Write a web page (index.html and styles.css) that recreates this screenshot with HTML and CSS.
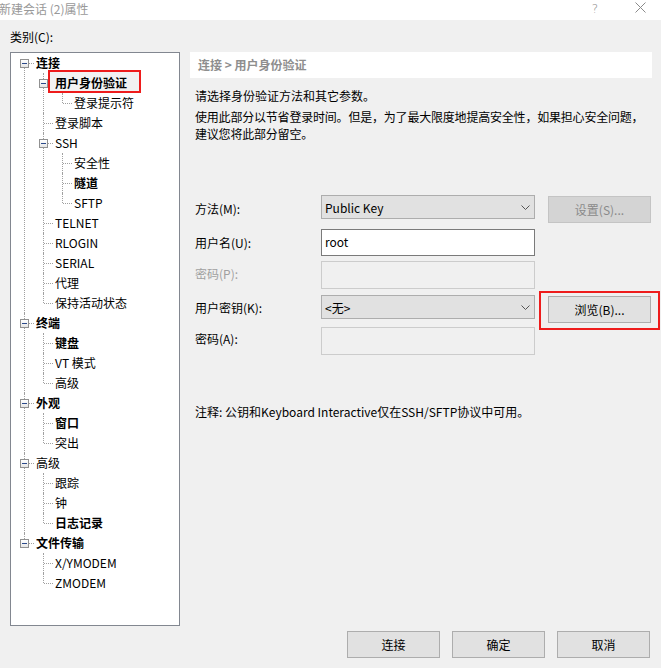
FILE: index.html
```html
<!DOCTYPE html>
<html lang="zh-CN">
<head>
<meta charset="utf-8">
<title>新建会话 (2)属性</title>
<link rel="stylesheet" href="styles.css">
</head>
<body>
<div class="titlebar">
  <span class="title">新建会话 (2)属性</span>
  <span class="tb-help">?</span>
  <span class="tb-close"><svg width="11" height="11" viewBox="0 0 11 11"><path d="M0.5 0.5L10.5 10.5M10.5 0.5L0.5 10.5" stroke="#8a8a8a" stroke-width="1" fill="none"/></svg></span>
</div>
<div class="content">
  <div class="cat-label">类别(C):</div>
  <div class="main">
    <div class="treebox">
      <ul class="tree">
        <li><div class="row"><span class="exp"></span><span class="lbl b">连接</span></div>
          <ul>
            <li><div class="row"><span class="exp"></span><span class="lbl b sel">用户身份验证</span></div>
              <ul>
                <li><div class="row"><span class="lbl">登录提示符</span></div></li>
              </ul>
            </li>
            <li><div class="row"><span class="lbl">登录脚本</span></div></li>
            <li><div class="row"><span class="exp"></span><span class="lbl">SSH</span></div>
              <ul>
                <li><div class="row"><span class="lbl">安全性</span></div></li>
                <li><div class="row"><span class="lbl b">隧道</span></div></li>
                <li><div class="row"><span class="lbl">SFTP</span></div></li>
              </ul>
            </li>
            <li><div class="row"><span class="lbl">TELNET</span></div></li>
            <li><div class="row"><span class="lbl">RLOGIN</span></div></li>
            <li><div class="row"><span class="lbl">SERIAL</span></div></li>
            <li><div class="row"><span class="lbl">代理</span></div></li>
            <li><div class="row"><span class="lbl">保持活动状态</span></div></li>
          </ul>
        </li>
        <li><div class="row"><span class="exp"></span><span class="lbl b">终端</span></div>
          <ul>
            <li><div class="row"><span class="lbl b">键盘</span></div></li>
            <li><div class="row"><span class="lbl">VT 模式</span></div></li>
            <li><div class="row"><span class="lbl">高级</span></div></li>
          </ul>
        </li>
        <li><div class="row"><span class="exp"></span><span class="lbl b">外观</span></div>
          <ul>
            <li><div class="row"><span class="lbl b">窗口</span></div></li>
            <li><div class="row"><span class="lbl">突出</span></div></li>
          </ul>
        </li>
        <li><div class="row"><span class="exp"></span><span class="lbl">高级</span></div>
          <ul>
            <li><div class="row"><span class="lbl">跟踪</span></div></li>
            <li><div class="row"><span class="lbl">钟</span></div></li>
            <li><div class="row"><span class="lbl b">日志记录</span></div></li>
          </ul>
        </li>
        <li><div class="row"><span class="exp"></span><span class="lbl b">文件传输</span></div>
          <ul>
            <li><div class="row"><span class="lbl">X/YMODEM</span></div></li>
            <li><div class="row"><span class="lbl">ZMODEM</span></div></li>
          </ul>
        </li>
      </ul>
    </div>
    <div class="panel">
      <div class="crumb">连接 &gt; 用户身份验证</div>
      <p class="desc d1">请选择身份验证方法和其它参数。</p>
      <p class="desc d2">使用此部分以节省登录时间。但是，为了最大限度地提高安全性，如果担心安全问题，建议您将此部分留空。</p>
      <div class="form">
        <div class="flabel l1">方法(M):</div>
        <div class="select"><span>Public Key</span><svg class="chev" width="9" height="5" viewBox="0 0 9 5"><path d="M0.5 0.5L4.5 4.5L8.5 0.5" stroke="#555" stroke-width="1" fill="none"/></svg></div>
        <div class="btn btn-dis btn-side">设置(S)...</div>

        <div class="flabel l2">用户名(U):</div>
        <div class="input">root</div>
        <div></div>

        <div class="flabel l3 dis">密码(P):</div>
        <div class="input input-dis"></div>
        <div></div>

        <div class="flabel l4">用户密钥(K):</div>
        <div class="select"><span>&lt;无&gt;</span><svg class="chev" width="9" height="5" viewBox="0 0 9 5"><path d="M0.5 0.5L4.5 4.5L8.5 0.5" stroke="#555" stroke-width="1" fill="none"/></svg></div>
        <div class="btn btn-side marked">浏览(B)...</div>

        <div class="flabel l5">密码(A):</div>
        <div class="input input-dis"></div>
        <div></div>
      </div>
      <p class="note">注释: 公钥和Keyboard Interactive仅在SSH/SFTP协议中可用。</p>
    </div>
  </div>
  <div class="footer">
    <div class="btn btn-foot">连接</div>
    <div class="btn btn-foot">确定</div>
    <div class="btn btn-foot">取消</div>
  </div>
</div>
</body>
</html>
```

FILE: styles.css
```css
* { box-sizing: border-box; }
html, body {
  margin: 0;
  padding: 0;
}
body {
  width: 661px;
  height: 668px;
  overflow: hidden;
  background: #f0f0f0;
  color: #000;
  font-family: "Microsoft YaHei", "Noto Sans CJK SC", sans-serif;
  font-size: 12px;
}

.titlebar {
  height: 20px;
  background: #fff;
  display: flex;
  align-items: center;
  position: relative;
}
.title {
  color: #999;
  font-size: 12px;
  line-height: 17px;
  margin-left: -1px;
  margin-top: -4px;
}
.tb-help {
  margin-left: auto;
  color: #8a8a8a;
  font-family: "DejaVu Sans", sans-serif;
  font-weight: 200;
  font-size: 12px;
  margin-top: -3px;
}
.tb-close {
  margin-left: 37px;
  margin-right: 15px;
  display: flex;
  margin-top: -5px;
}

.content {
  padding: 9px 0 0 10px;
}
.cat-label {
  height: 16px;
  line-height: 16px;
  margin-bottom: 7px;
}
.main {
  display: flex;
  gap: 10px;
  align-items: flex-start;
}

/* Tree */
.treebox {
  width: 170px;
  height: 574px;
  background: #fff;
  border: 1px solid #828790;
  overflow: hidden;
}
.tree, .tree ul {
  list-style: none;
  margin: 0;
  padding: 0;
}
.tree ul { padding-left: 19px; }
.tree li { position: relative; }
.tree li::before {
  content: "";
  position: absolute;
  left: 13px;
  top: 0;
  bottom: 0;
  border-left: 1px dotted #a0a0a0;
}
.tree li:last-child::before {
  bottom: auto;
  height: 10px;
}
.tree > li:first-child::before { top: 10px; }
.row {
  position: relative;
  height: 20px;
  line-height: 20px;
  padding-left: 25px;
  white-space: nowrap;
}
.row::before {
  content: "";
  position: absolute;
  left: 14px;
  top: 10px;
  width: 9px;
  border-top: 1px dotted #a0a0a0;
}
.exp {
  position: absolute;
  left: 9px;
  top: 6px;
  width: 9px;
  height: 9px;
  border: 1px solid #919191;
  background: linear-gradient(#ffffff, #e6e6e6);
  z-index: 1;
}
.exp::before {
  content: "";
  position: absolute;
  left: 1px;
  top: 3px;
  width: 5px;
  height: 1px;
  background: #2b4a8a;
}
.lbl {
  display: inline-block;
  height: 20px;
  line-height: 20px;
}
.b { font-weight: bold; }
.sel {
  position: relative;
  z-index: 0;
}
.sel::before {
  content: "";
  position: absolute;
  left: -5px;
  right: -12px;
  top: -1px;
  bottom: 2px;
  background: #f2f2f2;
  z-index: -1;
}
.sel::after {
  content: "";
  position: absolute;
  left: -7px;
  right: -14px;
  top: -3px;
  bottom: 0;
  border: 2px solid #ee1c1c;
}

/* Right panel */
.panel {
  width: 462px;
}
.crumb {
  height: 26px;
  line-height: 26px;
  background: #fff;
  padding-left: 8px;
  color: #8e8e8e;
  font-weight: bold;
}
.desc {
  margin: 0;
  padding-left: 5px;
  line-height: 17px;
}
.d1 { margin-top: 9px; }
.d2 { margin-top: 4px; padding-right: 0; letter-spacing: -0.2px; }

.form {
  display: grid;
  grid-template-columns: 126px 214px 116px;
  grid-template-rows: 34px 32px 34px 32px 28px;
  margin: 53px 0 0 5px;
}
.flabel { white-space: nowrap; }
.l1 { line-height: 27px; }
.l2 { line-height: 27px; }
.l3 { line-height: 26px; }
.l4 { line-height: 26px; }
.l5 { line-height: 24px; }
.dis { color: #a0a0a0; }

.select {
  height: 24px;
  border: 1px solid #adadad;
  background: #e1e1e1;
  display: flex;
  align-items: center;
  justify-content: space-between;
  padding: 0 4px 0 3px;
}
.chev { margin-top: 1px; }
.input {
  height: 27px;
  border: 1px solid #7a7a7a;
  background: #fff;
  padding-left: 3px;
  line-height: 24px;
}
.input-dis {
  height: 28px;
  border-color: #cccccc;
  background: #f0f0f0;
}

.btn {
  height: 27px;
  border: 1px solid #adadad;
  background: #e1e1e1;
  display: flex;
  align-items: center;
  justify-content: center;
}
.btn-side {
  margin-top: 1px;
  margin-left: 13px;
  width: 103px;
}
.btn-dis {
  background: #d4d4d4;
  border-color: #c4c4c4;
  color: #8a8a8a;
}
.marked { position: relative; }
.marked::after {
  content: "";
  position: absolute;
  left: -10px;
  right: -10px;
  top: -6px;
  bottom: -8px;
  border: 2px solid #ee1c1c;
}

.note {
  margin: 48px 0 0 5px;
  line-height: 17px;
}

.footer {
  display: flex;
  justify-content: flex-end;
  gap: 12px;
  padding-right: 11px;
  margin-top: 5px;
}
.btn-foot { width: 93px; }
```
